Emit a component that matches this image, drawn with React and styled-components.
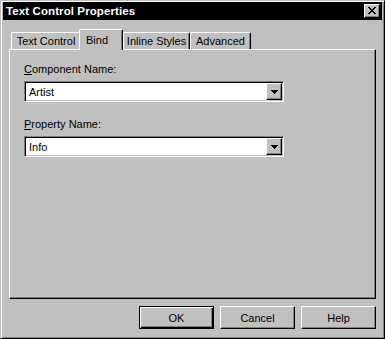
import React from 'react';
import styled, { createGlobalStyle } from 'styled-components';

const Global = createGlobalStyle`
  html, body {
    margin: 0;
    padding: 0;
    background: #c0c0c0;
  }
  body {
    font-family: 'Liberation Sans', Arial, sans-serif;
    font-size: 11px;
    color: #000;
  }
`;

const Window = styled.div`
  box-sizing: border-box;
  width: 385px;
  height: 339px;
  background: #c0c0c0;
  border: 1px solid;
  border-color: #c0c0c0 #000 #000 #c0c0c0;
  box-shadow: inset 1px 1px #fff, inset -1px -1px #808080;
  padding: 1px 2px 2px 2px;
  display: flex;
  flex-direction: column;
`;

const TitleBar = styled.div`
  height: 18px;
  background: #000;
  color: #fff;
  display: flex;
  align-items: center;
  justify-content: space-between;
  padding: 0 2px 0 3px;
`;

const TitleText = styled.span`
  font-weight: bold;
  font-size: 11.5px;
  letter-spacing: 0.1px;
`;

const Bevel = styled.div`
  box-sizing: border-box;
  background: #c0c0c0;
  border: 1px solid;
  border-color: #fff #000 #000 #fff;
  box-shadow: inset -1px -1px #808080;
  display: flex;
  align-items: center;
  justify-content: center;
`;

const CloseButton = styled(Bevel)`
  width: 16px;
  height: 14px;
  padding-bottom: 1px;
`;

const TabStrip = styled.div`
  height: 20px;
  margin-top: 9px;
  padding-left: 8px;
  display: flex;
  align-items: flex-end;
  position: relative;
  z-index: 1;
`;

const Tab = styled.div`
  box-sizing: border-box;
  width: ${({ $w }) => $w}px;
  height: ${({ $active }) => ($active ? 21 : 17)}px;
  margin: 0 0 ${({ $active }) => ($active ? -1 : 0)}px
    ${({ $active }) => ($active ? -2 : 0)}px;
  padding: ${({ $active }) => ($active ? '3px 0 0 6px' : '1px 0 0 0')};
  text-align: ${({ $active }) => ($active ? 'left' : 'center')};
  background: #c0c0c0;
  border-top: 1px solid #fff;
  border-left: 1px solid #fff;
  border-right: 1px solid #000;
  border-radius: 2px 2px 0 0;
  box-shadow: inset -1px 0 #808080;
  position: relative;
  z-index: ${({ $active }) => ($active ? 2 : 1)};
  white-space: nowrap;
  line-height: 14px;
`;

const Panel = styled.div`
  box-sizing: border-box;
  height: 250px;
  margin: 0 6px 0 6px;
  border: 1px solid;
  border-color: #fff #000 #000 #fff;
  box-shadow: inset -1px -1px #808080;
  padding: 12px 14px 0 14px;
  display: flex;
  flex-direction: column;
`;

const Field = styled.div`
  display: flex;
  flex-direction: column;
  margin-bottom: 15px;
`;

const Label = styled.label`
  line-height: 14px;
  margin-bottom: 5px;
`;

const Combo = styled.div`
  box-sizing: border-box;
  width: 260px;
  height: 21px;
  background: #fff;
  border: 1px solid;
  border-color: #808080 #fff #fff #808080;
  box-shadow: inset 1px 1px #000, inset -1px -1px #c0c0c0;
  padding: 2px 2px 2px 4px;
  display: flex;
  align-items: center;
  justify-content: space-between;
`;

const ComboValue = styled.span`
  line-height: 14px;
`;

const DropButton = styled(Bevel)`
  width: 16px;
  height: 17px;
  margin-right: -1px;
  padding-top: 1px;
`;

const ButtonRow = styled.div`
  display: flex;
  justify-content: flex-end;
  gap: 6px;
  margin: 7px 6px 0 0;
`;

const Button = styled(Bevel)`
  width: 75px;
  height: 23px;
  ${({ $default }) =>
    $default &&
    `
    border-color: #000;
    box-shadow: inset 1px 1px #fff, inset -1px -1px #000, inset -2px -2px #808080;
  `}
`;

const CloseGlyph = () => (
  <svg width="8" height="7" viewBox="0 0 8 7" shapeRendering="crispEdges">
    <path
      fill="#000"
      d="M0 0h2v1H0zM6 0h2v1H6zM1 1h2v1H1zM5 1h2v1H5zM2 2h4v1H2zM3 3h2v1H3zM2 4h4v1H2zM1 5h2v1H1zM5 5h2v1H5zM0 6h2v1H0zM6 6h2v1H6z"
    />
  </svg>
);

const Arrow = () => (
  <svg width="7" height="4" viewBox="0 0 7 4" shapeRendering="crispEdges">
    <path fill="#000" d="M0 0h7v1H0zM1 1h5v1H1zM2 2h3v1H2zM3 3h1v1H3z" />
  </svg>
);

const tabs = [
  { name: 'Text Control', w: 70 },
  { name: 'Bind', w: 44, active: true },
  { name: 'Inline Styles', w: 67 },
  { name: 'Advanced', w: 61 },
];

const ComboField = ({ hot, rest, value }) => (
  <Field>
    <Label>
      <u>{hot}</u>
      {rest}
    </Label>
    <Combo>
      <ComboValue>{value}</ComboValue>
      <DropButton>
        <Arrow />
      </DropButton>
    </Combo>
  </Field>
);

export default function App() {
  return (
    <>
      <Global />
      <Window>
        <TitleBar>
          <TitleText>Text Control Properties</TitleText>
          <CloseButton>
            <CloseGlyph />
          </CloseButton>
        </TitleBar>
        <TabStrip>
          {tabs.map((t) => (
            <Tab key={t.name} $w={t.w} $active={t.active}>
              {t.name}
            </Tab>
          ))}
        </TabStrip>
        <Panel>
          <ComboField hot="C" rest="omponent Name:" value="Artist" />
          <ComboField hot="P" rest="roperty Name:" value="Info" />
        </Panel>
        <ButtonRow>
          <Button $default>OK</Button>
          <Button>Cancel</Button>
          <Button>Help</Button>
        </ButtonRow>
      </Window>
    </>
  );
}
